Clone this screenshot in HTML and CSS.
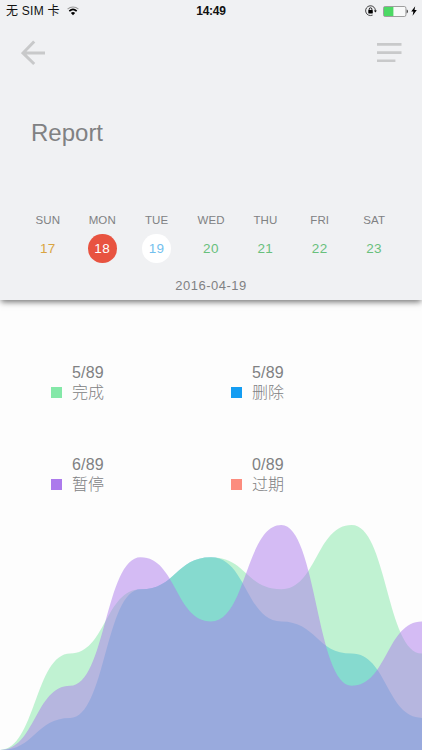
FILE: index.html
```html
<!DOCTYPE html>
<html lang="zh-CN">
<head>
<meta charset="utf-8">
<title>Report</title>
<link rel="stylesheet" href="styles.css">
</head>
<body>
<div class="screen">
  <header class="header">
    <div class="status">
      <div class="carrier"><span>无 SIM 卡</span>
        <svg class="wifi" width="12" height="10" viewBox="0 0 12 10" fill="none"><path d="M.6 3.2C3.7.2 8.3.2 11.4 3.2" stroke="#999" stroke-width="1.1"/><path d="M2.3 5.1C4.5 3 7.5 3 9.7 5.1" stroke="#000" stroke-width="1.6"/><path d="M3.9 7C5.1 5.8 6.9 5.8 8.1 7L6 9.3Z" fill="#000"/></svg>
      </div>
      <div class="time">14:49</div>
      <div class="power">
        <svg width="12" height="12" viewBox="0 0 12 12" fill="none"><path d="M10.4 6A4.9 4.9 0 1 0 7.6 10.1" stroke="#333" stroke-width=".9"/><path d="M8.9 5.4h3L10.4 7.5Z" fill="#111"/><rect x="3.3" y="5.1" width="4.5" height="3.4" rx=".4" fill="#000"/><path d="M4.2 5.3V4.2a1.35 1.35 0 0 1 2.7 0v1.1" stroke="#000" stroke-width=".9"/></svg>
        <svg class="battery" width="26" height="11" viewBox="0 0 26 11"><rect x=".5" y=".5" width="22.4" height="10" rx="1.6" fill="#f8f9f9" stroke="#888" stroke-width=".8"/><path d="M1 1h9.4v9H1Z" fill="#4cd964"/><path d="M23.7 3.6c1.6.3 1.6 3.5 0 3.8Z" fill="#333"/></svg>
        <svg class="bolt" width="6" height="10" viewBox="0 0 6 10"><path d="M4.2.2.2 5.5h2.2L1.6 9.8 5.8 4.1H3.5Z"/></svg>
      </div>
    </div>
    <nav class="nav">
      <svg width="26" height="26" viewBox="0 0 26 26" fill="none" stroke="#c8c9ca" stroke-width="3"><path d="M13.2 1.5 2 13l11.2 11M2.2 13H24"/></svg>
      <svg width="25" height="20" viewBox="0 0 25 20" fill="#c8c9ca"><path d="M0 0h24.5v2.7H0zM0 8.2h24.5v2.7H0zM0 16.4h18.4v2.7H0z"/></svg>
    </nav>
    <h1 class="title">Report</h1>
    <div class="week">
      <div class="day"><span class="name">SUN</span><span class="num past">17</span></div>
      <div class="day"><span class="name">MON</span><span class="num today">18</span></div>
      <div class="day"><span class="name">TUE</span><span class="num selected">19</span></div>
      <div class="day"><span class="name">WED</span><span class="num">20</span></div>
      <div class="day"><span class="name">THU</span><span class="num">21</span></div>
      <div class="day"><span class="name">FRI</span><span class="num">22</span></div>
      <div class="day"><span class="name">SAT</span><span class="num">23</span></div>
    </div>
    <div class="date">2016-04-19</div>
  </header>
  <main class="main">
    <section class="stats">
      <div class="stat"><i class="swatch green"></i><div class="count">5/89</div><div class="label">完成</div></div>
      <div class="stat"><i class="swatch blue"></i><div class="count">5/89</div><div class="label">删除</div></div>
      <div class="stat"><i class="swatch purple"></i><div class="count">6/89</div><div class="label">暂停</div></div>
      <div class="stat"><i class="swatch red"></i><div class="count">0/89</div><div class="label">过期</div></div>
    </section>
    <svg class="chart" width="422" height="225" viewBox="0 0 422 225">
      <path class="area-blue" d="M0 225C35.2 225 35.2 192.9 70.3 192.9S105.5 64.3 140.7 64.3S175.8 32.2 211 32.2S246.2 96.4 281.3 96.4S316.5 128.6 351.7 128.6S386.8 192.9 422 192.9V225Z"/>
      <path class="area-green" d="M0 225C35.2 225 35.2 128.6 70.3 128.6S105.5 64.3 140.7 64.3S175.8 32.2 211 32.2S246.2 64.3 281.3 64.3S316.5 0 351.7 0S386.8 128.6 422 128.6V225Z"/>
      <path class="area-purple" d="M0 225C35.2 225 35.2 160.7 70.3 160.7S105.5 32.2 140.7 32.2S175.8 96.4 211 96.4S246.2 0 281.3 0S316.5 160.7 351.7 160.7S386.8 96.4 422 96.4V225Z"/>
    </svg>
  </main>
</div>
</body>
</html>
```
FILE: styles.css
```css
* { box-sizing: border-box; }
body {
  margin: 0;
  background: #fdfdfd;
  color: #808183;
  font-family: "Liberation Sans", "Noto Sans CJK SC", sans-serif;
}
svg { display: block; }
.screen {
  width: 422px;
  height: 750px;
  display: flex;
  flex-direction: column;
  overflow: hidden;
}
.header {
  flex: none;
  height: 300px;
  background: #f0f1f3;
  box-shadow: 0 3px 6px -1px rgba(0, 0, 0, .55);
  display: flex;
  flex-direction: column;
}
.status {
  height: 22px;
  padding: 0 5px 0 6px;
  display: grid;
  grid-template-columns: 1fr auto 1fr;
  align-items: center;
  color: #111;
  font-size: 12px;
  line-height: 22px;
}
.carrier { display: flex; align-items: center; gap: 7px; white-space: nowrap; letter-spacing: .25px; }
.time { margin-right: 1px; font-weight: 700; font-size: 12px; letter-spacing: -.25px; }
.power { display: flex; align-items: center; justify-content: flex-end; }
.battery { margin-left: 6px; }
.bolt { margin-left: 2px; }
.nav {
  display: flex;
  justify-content: space-between;
  align-items: flex-start;
  height: 34px;
  margin-top: 18px;
  padding: 0 20px 0 21px;
}
.nav svg:last-child { margin-top: 3px; }
.title {
  margin: 44px 0 0 31px;
  font-size: 24px;
  font-weight: 400;
  line-height: 30px;
}
.week {
  display: grid;
  grid-template-columns: repeat(7, 1fr);
  margin: 64px 20.7px 0;
}
.day { display: flex; flex-direction: column; align-items: center; }
.name { font-size: 11.5px; line-height: 16px; letter-spacing: .1px; }
.num {
  width: 28.5px;
  height: 28.5px;
  margin-top: 6px;
  border-radius: 50%;
  color: #68c07c;
  font-size: 13.5px;
  line-height: 29px;
  text-align: center;
  letter-spacing: .4px;
}
.past { color: #d9a441; }
.today { color: #fff; background: #e85340; }
.selected { color: #73bfee; background: #fff; }
.date { margin-top: 14px; text-align: center; font-size: 13px; line-height: 18px; letter-spacing: .5px; }
.main { flex: 1; display: flex; flex-direction: column; justify-content: space-between; }
.stats {
  display: grid;
  grid-template-columns: 180px 180px;
  grid-template-rows: 92px 40px;
  margin: 63px 0 0 51px;
}
.stat {
  display: grid;
  grid-template-columns: 10.5px auto;
  grid-template-rows: 20px 20px;
  column-gap: 10.5px;
  justify-content: start;
  font-size: 16px;
  line-height: 20px;
}
.swatch { grid-row: 2; grid-column: 1; width: 10.5px; height: 10.5px; margin-top: 4px; }
.count { grid-row: 1; grid-column: 2; letter-spacing: .2px; }
.label { grid-row: 2; grid-column: 2; font-weight: 300; }
.green { background: #84e8a8; }
.blue { background: #149df2; }
.purple { background: #ac7aec; }
.red { background: #fc8c7e; }
.area-blue { fill: #149df2; fill-opacity: .5; }
.area-green { fill: #84e8a8; fill-opacity: .5; }
.area-purple { fill: #ac7aec; fill-opacity: .5; }
```
